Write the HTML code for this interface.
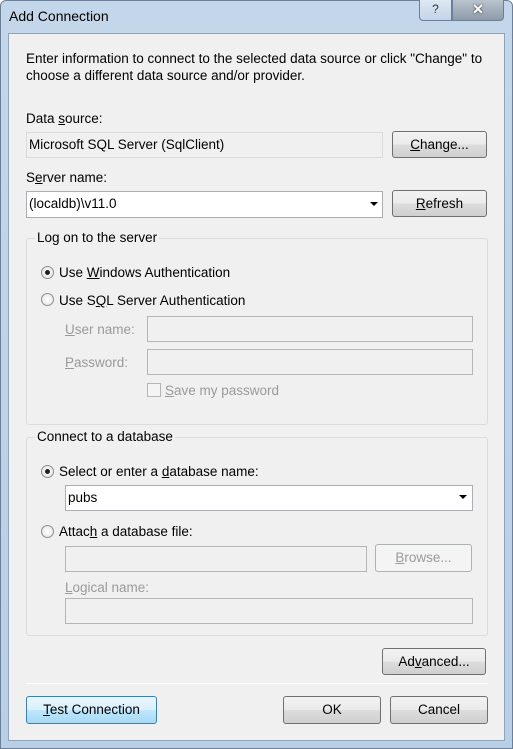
<!DOCTYPE html>
<html><head><style>
*{box-sizing:border-box;margin:0;padding:0}
body{width:513px;height:749px;position:relative;overflow:hidden;font-family:"Liberation Sans",sans-serif;font-size:13.5px;color:#000;background:#fff}
.a{position:absolute}
.frame{left:0;top:0;width:513px;height:749px;background:linear-gradient(#c4d7ea,#b9cfe6);border:1px solid #6b7f96;border-radius:6px 6px 0 0}
.client{left:8px;top:33px;width:497px;height:708px;background:#f0f0f0;border:1px solid #8fa3bb}
.t{position:absolute;white-space:nowrap;line-height:15px}
.g{color:#9a9a9a}
.box{position:absolute;background:#fff;border:1px solid #abadb3}
.dis{background:#f0f0f0;border:1px solid #c9c9c9}
.btn{position:absolute;border:1px solid #707070;border-radius:3px;background:linear-gradient(#f2f2f2 0,#ebebeb 50%,#dddddd 51%,#cfcfcf 100%);text-align:center;line-height:25px}
.btnd{border-color:#adb2b5;color:#9a9a9a;background:#f4f4f4}
.grp{position:absolute;border:1px solid #dcdcdc;border-radius:3px}
.grp span{position:absolute;top:-9px;left:8px;background:#f0f0f0;padding:0 2px;line-height:15px}
.rad{position:absolute;width:13px;height:13px;border-radius:50%;border:1px solid #8e8f8f;background:radial-gradient(#fff,#e0e0e0)}
.rad.on::after{content:"";position:absolute;left:3px;top:3px;width:5px;height:5px;border-radius:50%;background:#222}
.arr{position:absolute;width:0;height:0;border-left:4px solid transparent;border-right:4px solid transparent;border-top:4px solid #000}
u{text-decoration:underline}
</style></head><body>
<div class="a frame"></div>
<div class="t" style="left:9px;top:9px;font-size:14px">Add Connection</div>
<div class="a" style="left:419px;top:0;width:33px;height:21px;border:1px solid #6b7f96;border-top:none;border-radius:0 0 0 4px;background:linear-gradient(#dde8f3,#c3d5e8);text-align:center;font-size:12px;line-height:18px;color:#333">?</div>
<div class="a" style="left:452px;top:0;width:52px;height:21px;border:1px solid #6b7f96;border-top:none;border-radius:0 0 4px 0;background:linear-gradient(#b9c4cf,#8e9aa8);text-align:center;font-size:14px;font-weight:bold;line-height:18px;color:#fff;text-shadow:0 0 2px #333">✕</div>
<div class="a client"></div>

<div class="t" style="left:26px;top:51px">Enter information to connect to the selected data source or click "Change" to</div>
<div class="t" style="left:26px;top:68px">choose a different data source and/or provider.</div>

<div class="t" style="left:26px;top:111px">Data <u>s</u>ource:</div>
<div class="box" style="left:26px;top:132px;width:357px;height:26px;background:#f0f0f0;border-color:#dadada"></div>
<div class="t" style="left:29px;top:137px">Microsoft SQL Server (SqlClient)</div>
<div class="btn" style="left:392px;top:131px;width:95px;height:27px"><u>C</u>hange...</div>

<div class="t" style="left:26px;top:170px">S<u>e</u>rver name:</div>
<div class="box" style="left:26px;top:191px;width:357px;height:27px"></div>
<div class="t" style="left:29px;top:196px">(localdb)\v11.0</div>
<div class="arr" style="left:370px;top:202px"></div>
<div class="btn" style="left:392px;top:190px;width:95px;height:27px"><u>R</u>efresh</div>

<div class="grp" style="left:26px;top:238px;width:462px;height:187px"><span>Log on to the server</span></div>
<div class="rad on" style="left:41px;top:266px"></div>
<div class="t" style="left:59px;top:265px">Use <u>W</u>indows Authentication</div>
<div class="rad" style="left:41px;top:293px"></div>
<div class="t" style="left:59px;top:293px">Use S<u>Q</u>L Server Authentication</div>
<div class="t g" style="left:65px;top:322px"><u>U</u>ser name:</div>
<div class="box dis" style="left:147px;top:316px;width:326px;height:26px;border-color:#b5b5b5"></div>
<div class="t g" style="left:65px;top:355px"><u>P</u>assword:</div>
<div class="box dis" style="left:147px;top:349px;width:326px;height:26px;border-color:#b5b5b5"></div>
<div class="a" style="left:147px;top:383px;width:14px;height:14px;border:1px solid #b5b5b5;background:#f4f4f4"></div>
<div class="t g" style="left:165px;top:383px"><u>S</u>ave my password</div>

<div class="grp" style="left:26px;top:437px;width:462px;height:199px"><span>Connect to a database</span></div>
<div class="rad on" style="left:41px;top:465px"></div>
<div class="t" style="left:59px;top:464px">Select or enter a <u>d</u>atabase name:</div>
<div class="box" style="left:65px;top:485px;width:408px;height:26px"></div>
<div class="t" style="left:68px;top:490px">pubs</div>
<div class="arr" style="left:459px;top:495px"></div>
<div class="rad" style="left:41px;top:525px"></div>
<div class="t" style="left:59px;top:524px">Attac<u>h</u> a database file:</div>
<div class="box dis" style="left:65px;top:546px;width:302px;height:26px;border-color:#b5b5b5"></div>
<div class="btn btnd" style="left:375px;top:544px;width:97px;height:28px"><u>B</u>rowse...</div>
<div class="t g" style="left:65px;top:580px"><u>L</u>ogical name:</div>
<div class="box dis" style="left:65px;top:598px;width:408px;height:26px;border-color:#b5b5b5"></div>

<div class="btn" style="left:382px;top:648px;width:104px;height:27px">Ad<u>v</u>anced...</div>
<div class="a" style="left:26px;top:683px;width:462px;height:1px;background:#d5d5d5;border-bottom:1px solid #fff"></div>
<div class="btn" style="left:26px;top:696px;width:131px;height:28px;border-color:#3c7fb1;background:linear-gradient(#eaf6fd,#d9f0fc 50%,#bee6fd 51%,#a7d9f5)"><u>T</u>est Connection</div>
<div class="btn" style="left:283px;top:696px;width:98px;height:28px">OK</div>
<div class="btn" style="left:390px;top:696px;width:98px;height:28px">Cancel</div>
</body></html>
